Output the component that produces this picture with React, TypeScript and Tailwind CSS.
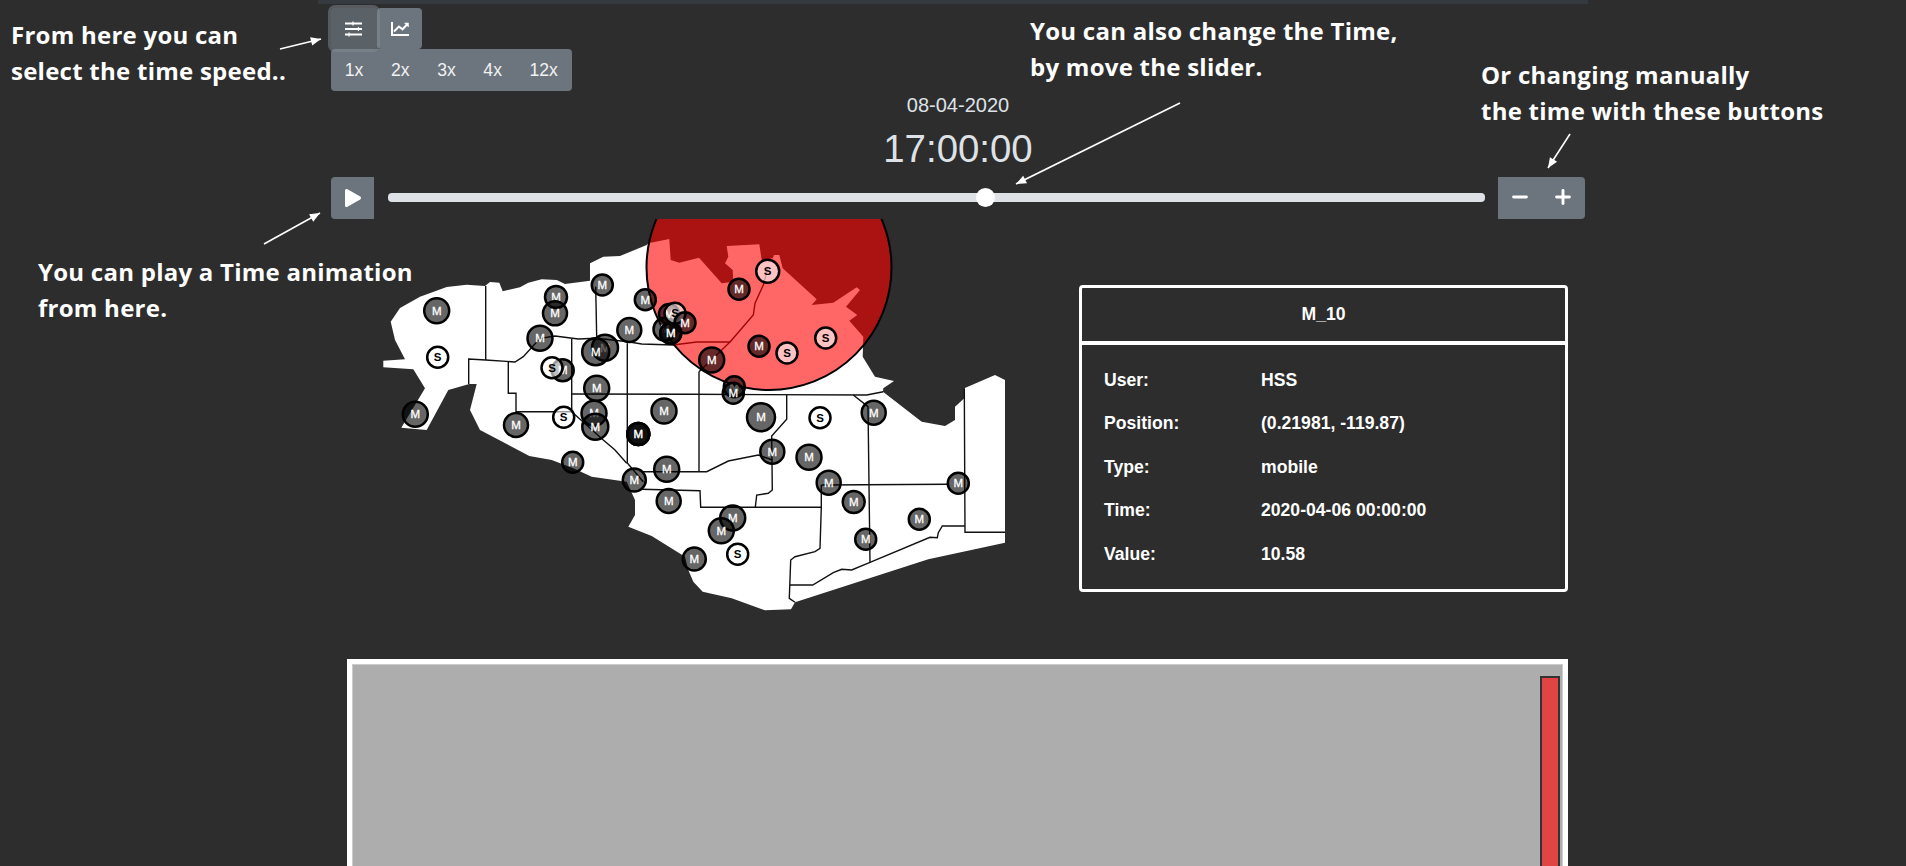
import { BsPlayFill } from "react-icons/bs";
import { Minus, Plus } from "lucide-react";

type MapNode = [kind: "M" | "S", x: number, y: number, r: number];

const LAND =
  "383.3,360.7 405,359.3 395,340 390.7,321.7 400,308 420,296.7 446.7,287 466.7,284.7 485,286 490,282 499.3,282.7 502.7,291.3 520,287.3 528.3,282.7 541.7,279.3 556.7,280 565,284 590,280.7 590,263.3 603.3,256.7 620,256 646.7,245 648.3,243.3 669.3,239 670.7,260 679.3,262.7 699,257.7 721.7,283.3 733.3,281.7 732.7,270 725,263.3 728.3,256.7 726.7,246 759.3,244.3 761.7,260 772.7,258.3 774,255 779.3,255 782.7,268.3 816.7,299.3 811.7,305 833.3,302.7 856.7,287.3 860,290 846,306.7 857.3,315 849.3,320.7 863.3,336.7 862.7,356.7 875,376.7 894,381 883.3,388.3 883,391.7 921.7,421.7 945,426 955,420 955,406.7 964.3,398.3 964.3,388.3 995,375 1005,380 1005,542.7 928.3,559.3 795,602.3 791,609.3 765,610.3 731.7,598.3 702.7,591.7 693.3,581.7 688.3,570 685,556.7 651.7,536 628.3,526.7 635,515 635,500 626.7,481.7 591.7,476.7 573.3,468.3 551.7,460 529.3,456 480,430 470,410 476.7,384 469.3,384 448.3,390 426.7,430 401.3,427.7 425,388.3 413.3,369.3 383.3,367.3";

const BORDERS = [
  "485.7,286 485.7,360",
  "468.7,384 468.7,359 485.7,360 515,362 523.3,356.7 540,338.3 555,336 578.3,339 596.7,338.3 628,341.7 641.7,344 673,345 696.7,342 730,342 753.3,315 755,303.3 763.3,285 768,266.7",
  "508.3,362 508.3,393.3 516,393.3 516,411.7 571.7,411.7 571.7,339",
  "595.7,286.7 596.7,338.3",
  "571.7,394 690,394.3 866.7,395 883.3,391.7",
  "627.3,343.3 627.3,463 643.3,481.7",
  "699,371.7 699,471.7",
  "699,371.7 730,342",
  "786.7,395 786.7,419.3 771.7,436 772.3,490 768.3,493.3 756.7,495 755.3,507.3",
  "641.7,471.7 706.7,471.7 728.3,461 758.3,455 772.3,460",
  "641.7,489.3 700,490.7 700.7,507.3 821.3,507.3",
  "821.3,485 821.3,507.3 820,548.3 815,551.7 795,556.7 790.7,560 789.3,598.3 795,602.3",
  "790,585 812.7,585 833.3,572.7 841.7,569.3 851.7,570 870,562.3 930,537.3 937.3,537.7 938.3,532.7 942.3,526 965,526",
  "964.3,388.3 965,532.3 1005,532.3",
  "853.3,395 868,406.7 870,562.3",
  "821.3,485 948.3,484.3",
  "571.7,411.7 603.3,440 615,450 626.7,463.3",
];

const NODES: MapNode[] = [
  ["M", 436.7, 310.7, 12.5],
  ["S", 437.7, 357.3, 10.5],
  ["M", 415.3, 414.3, 12.5],
  ["M", 556, 297, 11],
  ["M", 555, 313.3, 12],
  ["M", 602.3, 285, 10.5],
  ["M", 645.3, 299.7, 10.5],
  ["M", 540, 338.3, 12.5],
  ["M", 562.7, 370.3, 11],
  ["S", 552, 367.7, 10.5],
  ["M", 629.3, 330, 12],
  ["M", 605, 347.7, 13],
  ["M", 595.7, 351.7, 13.5],
  ["M", 596.7, 388.3, 12.5],
  ["M", 594, 413.3, 12.5],
  ["M", 595.3, 426.7, 13],
  ["S", 563.7, 417.3, 10.5],
  ["M", 516, 425, 12],
  ["M", 638.3, 434, 11],
  ["M", 638.3, 434, 11],
  ["M", 638.3, 434, 11],
  ["M", 664, 411, 12.5],
  ["M", 665, 329.3, 11.5],
  ["M", 670.7, 333.3, 10.5],
  ["M", 670.7, 333.3, 10.5],
  ["M", 669, 314, 10],
  ["S", 675, 313.3, 10.5],
  ["M", 685, 322.7, 10.5],
  ["M", 739, 289.3, 10.5],
  ["S", 767.7, 271.3, 11.5],
  ["M", 711.7, 360, 12.5],
  ["M", 759, 346.3, 10.5],
  ["S", 787, 353, 10.5],
  ["S", 825.7, 338, 10.5],
  ["M", 734.3, 386.7, 10.5],
  ["M", 733.3, 393.3, 10.5],
  ["M", 761, 417.3, 14],
  ["S", 820, 417.7, 10.5],
  ["M", 873.7, 412.7, 12],
  ["M", 772.3, 451.7, 12],
  ["M", 809, 457.3, 12.5],
  ["M", 828.7, 482.7, 12],
  ["M", 958.3, 483.3, 10.5],
  ["M", 853.7, 502, 11],
  ["M", 919.3, 519.3, 10.5],
  ["M", 865.7, 539.3, 10.5],
  ["M", 732.7, 518, 12.5],
  ["M", 721.3, 530.7, 12.5],
  ["S", 737.7, 554.3, 10.5],
  ["M", 694.3, 559, 11.5],
  ["M", 572.7, 462.3, 10.5],
  ["M", 634.3, 480, 11.5],
  ["M", 666.7, 469.3, 12.5],
  ["M", 668.7, 501, 12],
];

const ARROWS = [
  [280, 49, 321, 39],
  [264, 244, 320, 213],
  [1180, 103, 1016, 184],
  [1570, 134, 1548, 168],
];

const NOTES = [
  { left: "left-[11px] top-[17px]", lines: ["From here you can", "select the time speed.."] },
  { left: "left-[1030px] top-[13px]", lines: ["You can also change the Time,", "by move the slider."] },
  { left: "left-[1481px] top-[57px]", lines: ["Or changing manually", "the time with these buttons"] },
  { left: "left-[38px] top-[254px]", lines: ["You can play a Time animation", "from here."] },
];

const SPEEDS = ["1x", "2x", "3x", "4x", "12x"];

const DETAILS = [
  ["User:", "HSS"],
  ["Position:", "(0.21981, -119.87)"],
  ["Type:", "mobile"],
  ["Time:", "2020-04-06 00:00:00"],
  ["Value:", "10.58"],
];

function SlidersIcon() {
  return (
    <svg width="18" height="16" viewBox="0 0 18 16" fill="none" stroke="#ffffff">
      <path d="M0 2.5h17M0 8h17M0 13.5h17" strokeWidth="2" />
      <path d="M8 0.5v4M13.5 6v4M4 11.5v4" strokeWidth="1.2" />
    </svg>
  );
}

function ChartIcon() {
  return (
    <svg width="18" height="14" viewBox="0 0 18 14" fill="none" stroke="#ffffff">
      <path d="M1 0v13h17" strokeWidth="2" />
      <path d="M3 9.5l5-5 3.5 2.8 4.8-5" strokeWidth="2" />
      <path d="M13.5 1h4v4z" fill="#ffffff" strokeWidth="0.5" />
    </svg>
  );
}

function LocationMap() {
  return (
    <svg viewBox="370 219 660 400" className="h-[400px] w-[660px] shrink-0">
      <polygon points={LAND} fill="#ffffff" />
      {BORDERS.map((points, i) => (
        <polyline key={i} points={points} fill="none" stroke="#111111" strokeWidth="1.4" />
      ))}
      <circle cx="769" cy="267.5" r="122.5" fill="#ff0000" fillOpacity="0.6" stroke="#000000" strokeWidth="2" />
      {NODES.map(([kind, x, y, r], i) => (
        <g key={i}>
          <circle
            cx={x}
            cy={y}
            r={r}
            fill={kind === "M" ? "#000000" : "#ffffff"}
            fillOpacity="0.6"
            stroke="#000000"
            strokeWidth="2.5"
          />
          <text
            x={x}
            y={y + 4}
            textAnchor="middle"
            fontSize="11.5"
            fontWeight={kind === "M" ? "400" : "700"}
            fontFamily="'Liberation Sans', Arial, sans-serif"
            fill={kind === "M" ? "#ffffff" : "#000000"}
            stroke={kind === "M" ? "#ffffff" : "none"}
            strokeWidth="0.3"
          >
            {kind}
          </text>
        </g>
      ))}
    </svg>
  );
}

export default function App() {
  return (
    <div className="relative h-[866px] overflow-hidden bg-[#2d2d2d] font-['Liberation_Sans',Arial,sans-serif]">
      <div className="mx-auto w-[1270px]">
        <div className="h-[4px] bg-[#343a40]" />
        <div className="pl-[13px] pr-[3px]">
          {/* Tabs */}
          <div className="mt-[4px] flex h-[41px]">
            <button className="relative z-10 flex w-[46px] items-center justify-center rounded bg-[#5a6268] shadow-[0_0_0_3px_rgba(130,138,145,0.5)]">
              <SlidersIcon />
            </button>
            <button className="flex w-[45px] items-center justify-center rounded bg-[#6c757d]">
              <ChartIcon />
            </button>
          </div>

          {/* Speed */}
          <div className="flex h-[42px] w-fit items-center rounded bg-[#6c757d] text-[17.6px] text-[#f1f1f1]">
            {SPEEDS.map((speed) => (
              <span key={speed} className="px-[13.8px]">
                {speed}
              </span>
            ))}
          </div>

          {/* Clock */}
          <div className="mt-[2px] text-center text-xl leading-[24px] text-[#dee2e6]">08-04-2020</div>
          <div className="mt-[9px] text-center text-[38.4px] leading-[46px] text-[#dee2e6]">17:00:00</div>

          {/* Time controls */}
          <div className="mt-[5px] flex h-[42px] items-center">
            <button className="flex h-full w-[43px] items-center justify-center rounded-l bg-[#6c757d] text-white">
              <BsPlayFill size={32} />
            </button>
            <div className="relative mb-[1px] ml-[14px] mr-[13px] h-[9px] flex-1 rounded bg-[#dee2e6]">
              <div className="absolute left-[588px] top-[-5px] h-[19px] w-[19px] rounded-full bg-white" />
            </div>
            <div className="flex h-full w-[87px] items-center justify-center gap-[21px] rounded-r bg-[#6c757d] text-white">
              <Minus size={22} strokeWidth={3.2} className="mb-[2px]" />
              <Plus size={22} strokeWidth={3.2} className="mb-[2px]" />
            </div>
          </div>

          {/* Map and details */}
          <div className="ml-[39px] flex items-start">
            <LocationMap />
            <div className="ml-[49px] mt-[66px] h-[307px] w-[489px] shrink-0 rounded border-[3px] border-white text-[17.6px] font-bold text-white">
              <div className="flex h-[57px] items-center justify-center border-b-4 border-white">M_10</div>
              <div className="pl-[22px] pt-[13px]">
                {DETAILS.map(([label, value]) => (
                  <div key={label} className="flex h-[43.6px] items-center">
                    <span className="w-[157px]">{label}</span>
                    <span>{value}</span>
                  </div>
                ))}
              </div>
            </div>
          </div>

          {/* Chart */}
          <div className="ml-[16px] mt-[40px] h-[300px] w-[1221px] border-[5px] border-white bg-[#adadad] pr-[3px] pt-[12px] shadow-[inset_0_0_0_1px_#cccccc]">
            <div className="ml-auto h-[300px] w-[20px] border-2 border-[#333333] bg-[#e04444]" />
          </div>
        </div>
      </div>

      {/* Help overlay */}
      {NOTES.map((note) => (
        <div
          key={note.left}
          className={`absolute whitespace-pre font-['Open_Sans',sans-serif] text-2xl font-bold leading-[36px] tracking-[0.25px] text-white ${note.left}`}
        >
          {note.lines.join("\n")}
        </div>
      ))}
      <svg className="pointer-events-none absolute left-0 top-0 h-[866px] w-[1906px]" viewBox="0 0 1906 866">
        {ARROWS.map(([x1, y1, x2, y2], i) => {
          const angle = Math.atan2(y2 - y1, x2 - x1);
          const head = [0.4, -0.4]
            .map((d) => `${x2 - 11 * Math.cos(angle + d)},${y2 - 11 * Math.sin(angle + d)}`)
            .join(" ");
          return (
            <g key={i}>
              <line x1={x1} y1={y1} x2={x2} y2={y2} stroke="#ffffff" strokeWidth="1.6" />
              <polygon points={`${x2},${y2} ${head}`} fill="#ffffff" />
            </g>
          );
        })}
      </svg>
    </div>
  );
}
